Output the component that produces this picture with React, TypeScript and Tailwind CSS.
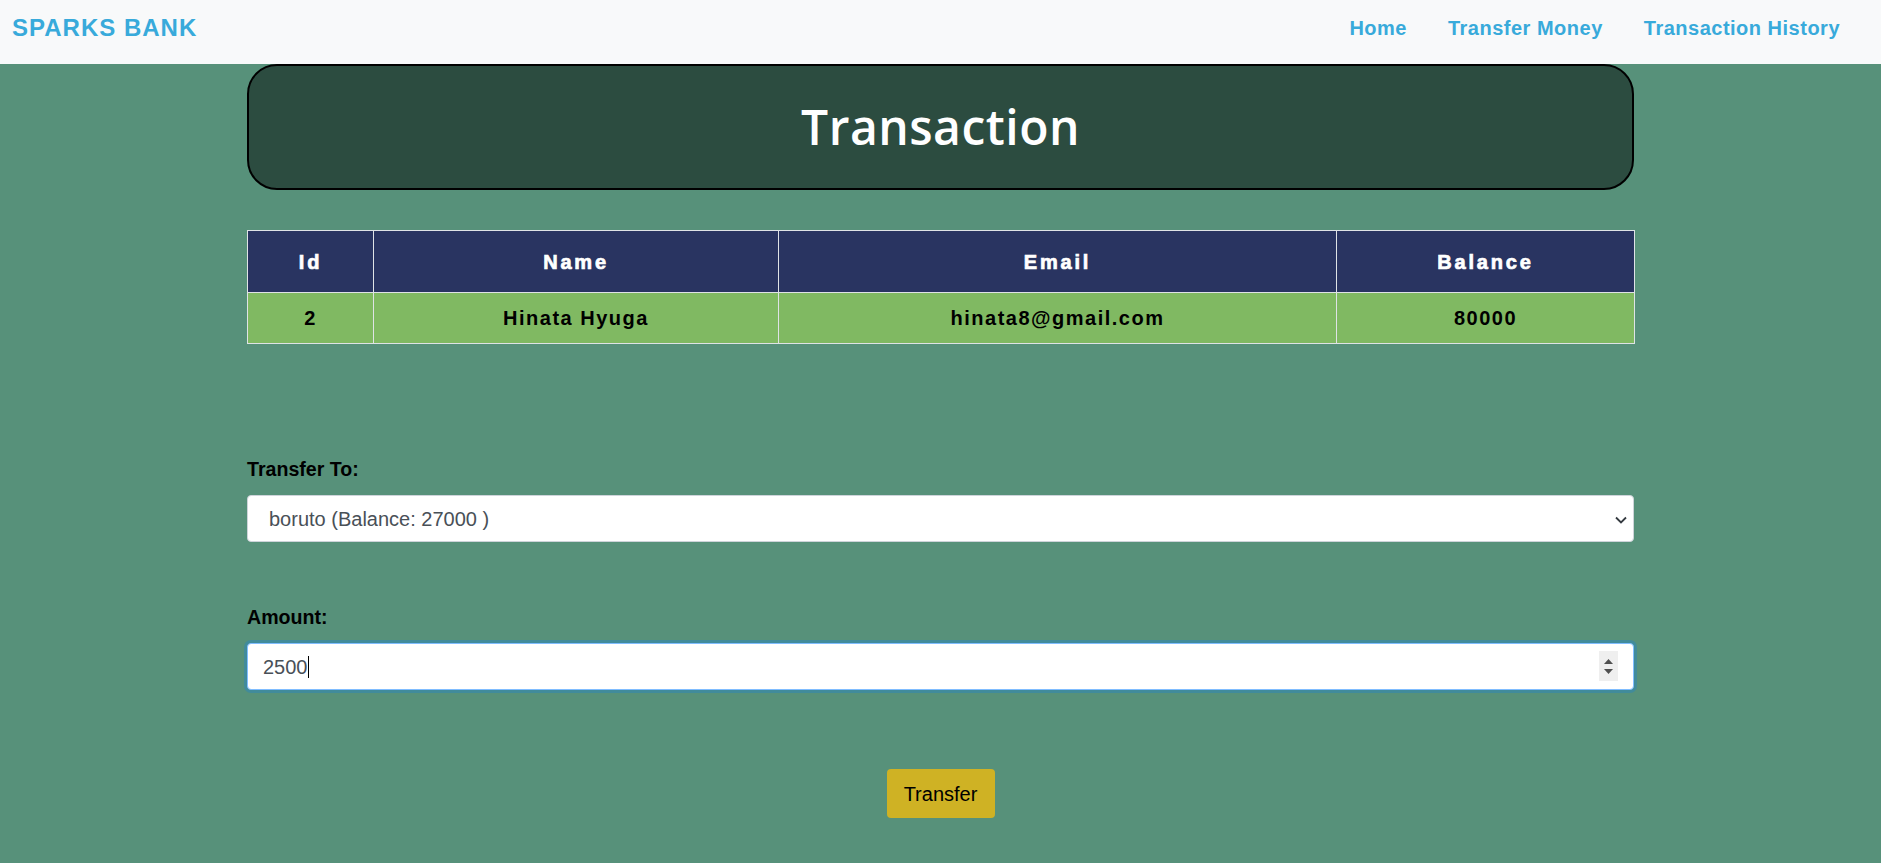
import React from "react";

export default function App() {
  const cols = [
    { w: "w-[126px]" },
    { w: "w-[405px]" },
    { w: "w-[558px]" },
    { w: "w-[298px]" },
  ];
  return (
    <div className="min-h-screen bg-[#57917a] font-['Liberation_Sans',Arial,sans-serif]">
      <nav className="h-[64px] bg-[#f8f9fa] flex items-center justify-between pl-[12px] pr-[41px] pb-[8px]">
        <div className="text-[24px] font-bold tracking-[1px] text-[#38aadb] leading-none">SPARKS BANK</div>
        <div className="flex items-center gap-[41px] text-[20px] font-bold tracking-[0.5px] text-[#38aadb] leading-none">
          <span>Home</span>
          <span>Transfer Money</span>
          <span>Transaction History</span>
        </div>
      </nav>

      <div className="w-[1387px] mx-auto">
        <div className="h-[126px] border-2 border-black rounded-[30px] bg-[#2c4c40] flex items-center justify-center">
          <h1 className="text-white text-[48px] font-semibold tracking-[0.5px] font-['Open_Sans',sans-serif] leading-none">
            Transaction
          </h1>
        </div>

        <table className="mt-[40px] w-full border-collapse table-fixed">
          <colgroup>
            {cols.map((c, i) => (
              <col key={i} className={c.w} />
            ))}
          </colgroup>
          <thead>
            <tr className="h-[62px] bg-[#293461]">
              {["Id", "Name", "Email", "Balance"].map((h) => (
                <th
                  key={h}
                  className="border border-[#dfe3e6] text-white text-[20px] font-bold tracking-[2.8px] text-center align-middle [-webkit-text-stroke:0.7px_white]"
                >
                  {h}
                </th>
              ))}
            </tr>
          </thead>
          <tbody>
            <tr className="h-[51px] bg-[#80b962]">
              {["2", "Hinata Hyuga", "hinata8@gmail.com", "80000"].map((d) => (
                <td
                  key={d}
                  className="border border-[#dfe3e6] text-black text-[20px] font-semibold tracking-[1.5px] text-center align-middle"
                >
                  {d}
                </td>
              ))}
            </tr>
          </tbody>
        </table>

        <div className="mt-[114px] text-[19.6px] font-bold leading-[23px] h-[23px] text-black">Transfer To:</div>
        <div className="relative mt-[14px] h-[47px] bg-white border border-[#ced4da] rounded-[4px] flex items-center pl-[21px] text-[20px] text-[#495057]">
          boruto (Balance: 27000 )
          <svg
            className="absolute right-[6px] top-[20px]"
            width="12"
            height="8"
            viewBox="0 0 12 8"
          >
            <path d="M1 1.5l5 5 5-5" fill="none" stroke="#343a40" strokeWidth="1.8" />
          </svg>
        </div>

        <div className="mt-[64px] text-[19.6px] font-bold leading-[23px] h-[23px] text-black">Amount:</div>
        <div className="relative mt-[14px] h-[47px] bg-white border border-[#80bdff] rounded-[4px] shadow-[0_0_0_3px_rgba(0,123,255,0.25)] flex items-center pl-[15px] text-[20px] text-[#495057]">
          <span>2500</span>
          <span className="w-px h-[22px] bg-black" />
          <div className="absolute right-[15px] top-[7px] w-[19px] h-[30px] bg-[#efefef] flex flex-col items-center justify-center gap-[5px]">
            <svg width="9" height="5" viewBox="0 0 9 5">
              <path d="M0 5L4.5 0L9 5Z" fill="#505050" />
            </svg>
            <svg width="9" height="5" viewBox="0 0 9 5">
              <path d="M0 0L4.5 5L9 0Z" fill="#505050" />
            </svg>
          </div>
        </div>

        <div className="mt-[79px] flex justify-center">
          <button className="w-[108px] h-[49px] bg-[#cfb224] rounded-[4px] text-[20px] text-black">
            Transfer
          </button>
        </div>
      </div>
    </div>
  );
}
